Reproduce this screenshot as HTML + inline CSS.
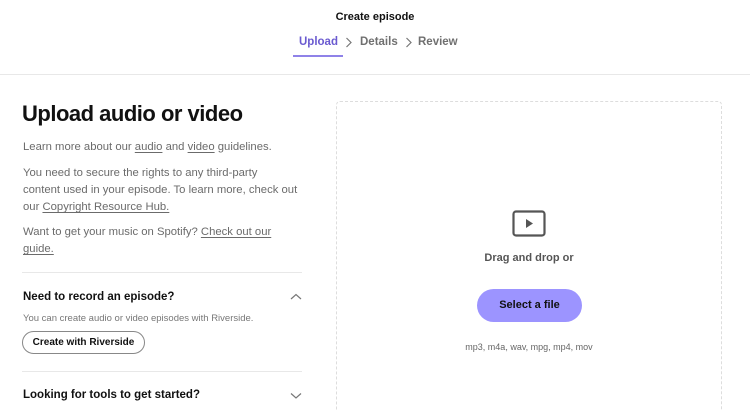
<!DOCTYPE html>
<html><head><style>
html,body{margin:0;width:750px;height:411px;overflow:hidden}
body{background:#fff;font-family:"Liberation Sans",sans-serif;color:#111;position:relative}
.a{position:absolute;white-space:nowrap}
u{text-decoration:underline;text-underline-offset:2px}
.g{color:#6b6b6b;font-size:11.3px;line-height:17px}
</style></head><body>
<div class="a" style="left:0;right:0;top:11px;text-align:center;font-size:11px;font-weight:bold">Create episode</div>
<div class="a" style="left:299px;top:36px;font-size:11.5px;font-weight:bold;color:#6a5ad0">Upload</div>
<div class="a" style="left:293px;top:55px;width:50px;height:2px;background:#8f82e8"></div>
<svg class="a" style="left:345px;top:37px" width="8" height="11"><path d="M1.5 1L6 5.5L1.5 10" fill="none" stroke="#777" stroke-width="1.2"/></svg>
<div class="a" style="left:360px;top:36px;font-size:11.5px;font-weight:bold;color:#707070">Details</div>
<svg class="a" style="left:405px;top:37px" width="8" height="11"><path d="M1.5 1L6 5.5L1.5 10" fill="none" stroke="#777" stroke-width="1.2"/></svg>
<div class="a" style="left:418px;top:36px;font-size:11.5px;font-weight:bold;color:#707070">Review</div>
<div class="a" style="left:0;right:0;top:74px;height:1px;background:#e8e8e8"></div>

<div class="a" style="left:22px;top:101px;font-size:22px;font-weight:bold;letter-spacing:-0.5px">Upload audio or video</div>
<div class="a g" style="left:23px;top:139px">Learn more about our <u>audio</u> and <u>video</u> guidelines.</div>
<div class="a g" style="left:23px;top:165px">You need to secure the rights to any third-party<br>content used in your episode. To learn more, check out<br>our <u>Copyright Resource Hub.</u></div>
<div class="a g" style="left:23px;top:224px">Want to get your music on Spotify? <u>Check out our</u><br><u>guide.</u></div>
<div class="a" style="left:22px;top:272px;width:280px;height:1px;background:#e8e8e8"></div>
<div class="a" style="left:23px;top:291px;font-size:11.5px;font-weight:bold">Need to record an episode?</div>
<svg class="a" style="left:290px;top:293px" width="12" height="8"><path d="M1 6L6 1.5L11 6" fill="none" stroke="#777" stroke-width="1.2"/></svg>
<div class="a" style="left:23px;top:313px;font-size:9.5px;color:#777">You can create audio or video episodes with Riverside.</div>
<div class="a" style="left:22px;top:331px;width:121px;height:21px;border:1px solid #888;border-radius:12px;font-size:10px;font-weight:bold;text-align:center;line-height:21px">Create with Riverside</div>
<div class="a" style="left:22px;top:371px;width:280px;height:1px;background:#e8e8e8"></div>
<div class="a" style="left:23px;top:389px;font-size:11.5px;font-weight:bold">Looking for tools to get started?</div>
<svg class="a" style="left:290px;top:392px" width="12" height="8"><path d="M1 1.5L6 6L11 1.5" fill="none" stroke="#777" stroke-width="1.2"/></svg>

<div class="a" style="left:336px;top:101px;width:384px;height:308px;border:1px dashed #ddd;border-bottom:none;border-radius:4px 4px 0 0"></div>
<svg class="a" style="left:512px;top:210px" width="34" height="28"><rect x="1.5" y="1.5" width="31" height="24" rx="2.5" fill="none" stroke="#555" stroke-width="2.2"/><path d="M14 9L21 13.5L14 18Z" fill="#555"/></svg>
<div class="a" style="left:336px;width:386px;top:252px;text-align:center;font-size:11px;font-weight:bold;color:#555">Drag and drop or</div>
<div class="a" style="left:477px;top:289px;width:105px;height:33px;border-radius:17px;background:#9c94ff;text-align:center;line-height:33px;font-size:11px;font-weight:bold;color:#111">Select a file</div>
<div class="a" style="left:336px;width:386px;top:342px;text-align:center;font-size:9px;color:#666">mp3, m4a, wav, mpg, mp4, mov</div>
</body></html>
